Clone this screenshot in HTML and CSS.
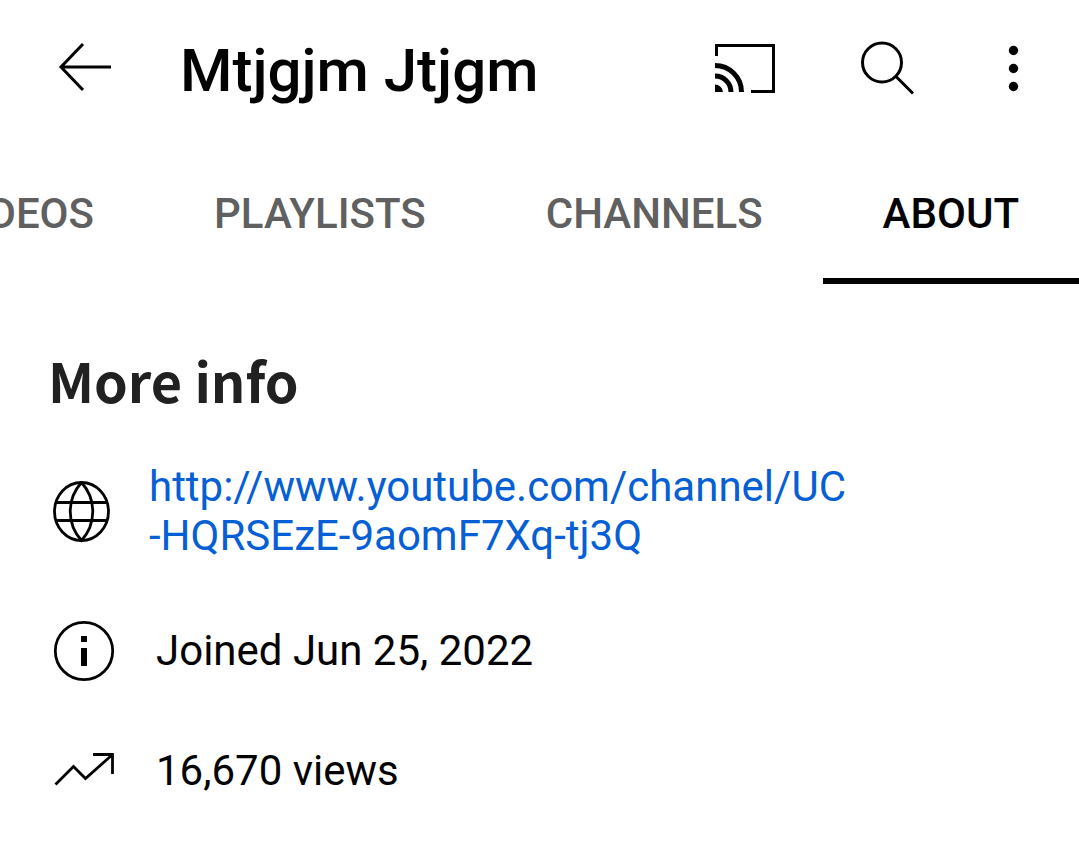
FILE: index.html
```html
<!DOCTYPE html>
<html lang="en">
<head>
<meta charset="utf-8">
<meta name="viewport" content="width=device-width, initial-scale=1">
<title>Mtjgjm Jtjgm</title>
<link rel="stylesheet" href="styles.css">
</head>
<body>
<header class="topbar">
  <button class="icon-button" type="button" aria-label="Back">
    <svg class="icon" viewBox="0 0 72 72"><path d="M63 35H14M35 12L13 35L35 58" stroke-width="3"/></svg>
  </button>
  <h1 class="title">Mtjgjm Jtjgm</h1>
  <div class="actions">
    <button class="icon-button" type="button" aria-label="Cast">
      <svg class="icon" viewBox="0 0 72 72"><path d="M7.500 24V13.500H64.500V59.500H42" stroke-width="3"/><path d="M6 33.500A26.500 26.500 0 0 1 32.500 60M6 44A16 16 0 0 1 22 60" stroke-width="5"/><path class="solid" d="M6 52.500A8 8 0 0 1 14 60H6Z"/></svg>
    </button>
    <button class="icon-button" type="button" aria-label="Search">
      <svg class="icon" viewBox="0 0 72 72"><circle cx="32" cy="30.500" r="19.500" stroke-width="3"/><path d="M46 44.500L63 61.500" stroke-width="3"/></svg>
    </button>
    <button class="icon-button" type="button" aria-label="More options">
      <svg class="icon icon-narrow" viewBox="0 0 44 72"><g class="solid"><circle cx="22.500" cy="18.500" r="4.700"/><circle cx="22.500" cy="36.500" r="4.700"/><circle cx="22.500" cy="54.500" r="4.700"/></g></svg>
    </button>
  </div>
</header>
<nav class="tabs" aria-label="Channel sections">
  <a class="tab" href="#videos">VIDEOS</a>
  <a class="tab" href="#playlists">PLAYLISTS</a>
  <a class="tab" href="#channels">CHANNELS</a>
  <a class="tab tab-active" href="#about" aria-current="page">ABOUT</a>
</nav>
<main class="about" id="about">
  <h2 class="heading">More info</h2>
  <ul class="info">
    <li class="row row-link">
      <svg class="icon" viewBox="0 0 72 72"><ellipse cx="33.500" cy="36.500" rx="27" ry="29" stroke-width="2.800"/><path d="M33.500 7.500C18.500 24 18.500 49 33.500 65.500C48.500 49 48.500 24 33.500 7.500M8 27.500H59M8 45.500H59" stroke-width="2.800"/></svg>
      <a class="link" href="http://www.youtube.com/channel/UC-HQRSEzE-9aomF7Xq-tj3Q">http://www.youtube.com/channel/UC<br>-HQRSEzE-9aomF7Xq-tj3Q</a>
    </li>
    <li class="row">
      <svg class="icon" viewBox="0 0 72 72"><circle cx="36" cy="36" r="28.700" stroke-width="2.800"/><path d="M36 21V27M36 33V51" stroke-width="6"/></svg>
      <span class="fact">Joined Jun 25, 2022</span>
    </li>
    <li class="row">
      <svg class="icon" viewBox="0 0 72 72"><path d="M7.500 49.500L25.500 31.500L37.500 43.500L64 20M45 19.500H64.500V39" stroke-width="2.800"/></svg>
      <span class="fact">16,670 views</span>
    </li>
  </ul>
</main>
</body>
</html>
```
FILE: styles.css
```css
* {
  box-sizing: border-box;
}

body {
  margin: 0;
  background: #fff;
  color: #030303;
  font-family: Roboto, "Liberation Sans", sans-serif;
  font-size: 42px;
  line-height: 49px;
}

.icon {
  display: block;
  flex: none;
  width: 72px;
  height: 72px;
  fill: none;
  stroke: #030303;
}

.icon-narrow {
  width: 44px;
}

.solid {
  fill: #030303;
  stroke: none;
}

.icon-button {
  padding: 0;
  border: 0;
  background: none;
  cursor: pointer;
}

.topbar {
  display: flex;
  align-items: center;
  height: 144px;
  padding: 0 44px 8px 48px;
}

.title {
  flex: 1;
  margin: 0;
  padding: 6px 0 0 60px;
  font-size: 60px;
  font-weight: 500;
  line-height: 72px;
  white-space: nowrap;
}

.actions {
  display: flex;
  gap: 69px;
}

.tabs {
  display: flex;
  justify-content: flex-end;
  overflow: hidden;
}

.tab {
  flex: none;
  padding: 45px 60px 46px;
  color: #606060;
  font-weight: 500;
  text-decoration: none;
}

.tab-active {
  color: #030303;
  box-shadow: inset 0 -6px #030303;
}

.about {
  padding: 60px 48px 32px;
}

.heading {
  margin: 0;
  color: #212121;
  font-family: "Noto Sans CJK SC", "Noto Sans", sans-serif;
  font-size: 54px;
  font-weight: 700;
  line-height: 72px;
}

.info {
  margin: 35px 0 0;
  padding: 0;
  list-style: none;
}

.row {
  display: flex;
  align-items: center;
  gap: 36px;
  min-height: 120px;
}

.row-link {
  gap: 29px;
  margin-bottom: 20px;
}

.link {
  color: #065fd4;
  text-decoration: none;
}

.fact {
  padding-bottom: 2px;
}
```
